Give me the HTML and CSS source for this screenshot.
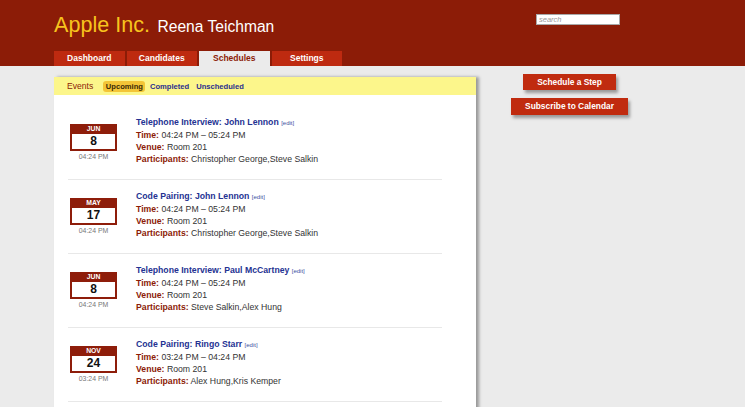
FILE: index.html
```html
<!DOCTYPE html>
<html>
<head>
<meta charset="utf-8">
<title>Schedules</title>
<link rel="stylesheet" href="styles.css">
</head>
<body>
<header class="header">
  <div class="header-left">
    <div class="brand">
      <span class="company">Apple Inc.</span>
      <span class="user">Reena Teichman</span>
    </div>
    <nav class="tabs">
      <a class="tab">Dashboard</a>
      <a class="tab">Candidates</a>
      <a class="tab active">Schedules</a>
      <a class="tab">Settings</a>
    </nav>
  </div>
  <div class="header-right">
    <input class="search" type="text" placeholder="search">
  </div>
</header>

<div class="content">
  <main class="panel">
    <div class="filter-bar">
      <span class="filter-title">Events</span>
      <a class="filter active">Upcoming</a>
      <a class="filter">Completed</a>
      <a class="filter">Unscheduled</a>
    </div>
    <ul class="events">
      <li class="event">
        <div class="cal">
          <div class="cal-box">
            <div class="cal-month">JUN</div>
            <div class="cal-day">8</div>
          </div>
          <div class="cal-time">04:24 PM</div>
        </div>
        <div class="info">
          <div class="title">Telephone Interview: John Lennon <a class="edit">[edit]</a></div>
          <div><span class="label">Time:</span> 04:24 PM – 05:24 PM</div>
          <div><span class="label">Venue:</span> Room 201</div>
          <div><span class="label">Participants:</span> Christopher George,Steve Salkin</div>
        </div>
      </li>
      <li class="event">
        <div class="cal">
          <div class="cal-box">
            <div class="cal-month">MAY</div>
            <div class="cal-day">17</div>
          </div>
          <div class="cal-time">04:24 PM</div>
        </div>
        <div class="info">
          <div class="title">Code Pairing: John Lennon <a class="edit">[edit]</a></div>
          <div><span class="label">Time:</span> 04:24 PM – 05:24 PM</div>
          <div><span class="label">Venue:</span> Room 201</div>
          <div><span class="label">Participants:</span> Christopher George,Steve Salkin</div>
        </div>
      </li>
      <li class="event">
        <div class="cal">
          <div class="cal-box">
            <div class="cal-month">JUN</div>
            <div class="cal-day">8</div>
          </div>
          <div class="cal-time">04:24 PM</div>
        </div>
        <div class="info">
          <div class="title">Telephone Interview: Paul McCartney <a class="edit">[edit]</a></div>
          <div><span class="label">Time:</span> 04:24 PM – 05:24 PM</div>
          <div><span class="label">Venue:</span> Room 201</div>
          <div><span class="label">Participants:</span> Steve Salkin,Alex Hung</div>
        </div>
      </li>
      <li class="event">
        <div class="cal">
          <div class="cal-box">
            <div class="cal-month">NOV</div>
            <div class="cal-day">24</div>
          </div>
          <div class="cal-time">03:24 PM</div>
        </div>
        <div class="info">
          <div class="title">Code Pairing: Ringo Starr <a class="edit">[edit]</a></div>
          <div><span class="label">Time:</span> 03:24 PM – 04:24 PM</div>
          <div><span class="label">Venue:</span> Room 201</div>
          <div><span class="label">Participants:</span> Alex Hung,Kris Kemper</div>
        </div>
      </li>
    </ul>
  </main>
  <aside class="sidebar">
    <a class="btn">Schedule a Step</a>
    <a class="btn">Subscribe to Calendar</a>
  </aside>
</div>
</body>
</html>
```

FILE: styles.css
```css
* { box-sizing: border-box; }

html, body {
  margin: 0;
  padding: 0;
}

body {
  background: #ebebeb;
  font-family: "Liberation Sans", Arial, sans-serif;
  color: #333;
  overflow: hidden;
}

a { text-decoration: none; cursor: pointer; }

/* Header */
.header {
  display: flex;
  background: #8c1c07;
  height: 66px;
  padding-left: 54px;
}

.header-left {
  width: 482px;
  display: flex;
  flex-direction: column;
}

.brand {
  height: 51px;
  padding-top: 13px;
  line-height: 24px;
  white-space: nowrap;
}

.company {
  font-size: 21.6px;
  color: #f7c31e;
}

.user {
  font-size: 15.6px;
  color: #ffffff;
  margin-left: 3px;
}

.tabs {
  display: flex;
  gap: 2px;
  height: 15px;
}

.tab {
  width: 70.5px;
  height: 15px;
  line-height: 15px;
  text-align: center;
  background: #be2a10;
  color: #ffffff;
  font-weight: bold;
  font-size: 8.5px;
}

.tab.active {
  background: #ebebeb;
  color: #8c1c07;
}

.header-right {
  padding-top: 14px;
}

.search {
  display: block;
  width: 84px;
  height: 11px;
  border: 1px solid #a8a8a8;
  background: #fff;
  padding: 0 2px;
  margin: 0;
  font-family: "Liberation Sans", Arial, sans-serif;
  font-size: 7.5px;
  font-style: italic;
  outline: none;
}

.search::placeholder {
  color: #9a9a9a;
}

/* Content */
.content {
  display: flex;
  padding-left: 54px;
  padding-top: 8px;
  align-items: flex-start;
}

.panel {
  width: 422px;
  margin-top: 3px;
  background: #ffffff;
  min-height: 400px;
  box-shadow: 3px 0 3px rgba(0, 0, 0, 0.35);
}

.filter-bar {
  height: 18px;
  background: #fcf68b;
  display: flex;
  align-items: center;
  padding-left: 13px;
  gap: 2px;
}

.filter-title {
  font-size: 8.6px;
  color: #8c1c07;
  margin-right: 8px;
}

.filter {
  font-size: 7.6px;
  font-weight: bold;
  color: #2a2f8e;
  padding: 0 2.5px;
  height: 11px;
  line-height: 11px;
  border-radius: 3px;
}

.filter.active {
  background: #f3c537;
  color: #3a2a05;
}

.events {
  list-style: none;
  margin: 0 34px 0 14px;
  padding: 11px 0 0 0;
}

.event {
  display: flex;
  padding: 10px 0 14px 2px;
  border-bottom: 1px solid #e8e8e8;
}

.cal {
  width: 47px;
  margin-top: 8px;
  margin-right: 19px;
  flex-shrink: 0;
}

.cal-box {
  border: 2px solid #8e1d0a;
  border-top: none;
}

.cal-month {
  background: #8e1d0a;
  color: #fff;
  font-size: 6.8px;
  font-weight: bold;
  height: 10px;
  line-height: 10px;
  text-align: center;
}

.cal-day {
  height: 15px;
  line-height: 15px;
  font-size: 12px;
  font-weight: bold;
  text-align: center;
  color: #111;
}

.cal-time {
  font-size: 6.9px;
  color: #777;
  text-align: center;
  line-height: 10px;
  margin-top: 1px;
}

.info {
  font-size: 8.7px;
  line-height: 12px;
  color: #333;
  white-space: nowrap;
}

.title {
  font-weight: bold;
  color: #243292;
}

.edit {
  font-size: 6px;
  font-weight: normal;
  color: #4050a0;
}

.label {
  font-weight: bold;
  color: #8c1c07;
}

/* Sidebar */
.sidebar {
  width: 187px;
  display: flex;
  flex-direction: column;
  align-items: center;
  gap: 8px;
}

.btn {
  display: block;
  background: #c02b0f;
  color: #fff;
  font-weight: bold;
  font-size: 8.4px;
  height: 16px;
  line-height: 16px;
  padding: 0 14px;
  box-shadow: 2px 3px 3px rgba(0, 0, 0, 0.35);
  white-space: nowrap;
}

.btn + .btn {
  height: 17px;
  line-height: 17px;
}
```
